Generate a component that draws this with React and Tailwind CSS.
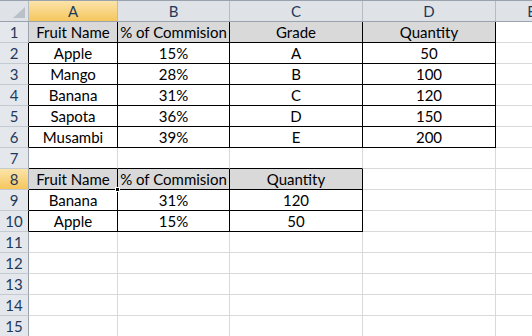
import React from "react";

const COLS = ["A", "B", "C", "D", "E"];
const WIDTHS = ["w-[89px]", "w-[112px]", "w-[133px]", "w-[133px]", "w-[72px]"];

const data = {
  1: ["Fruit Name", "% of Commision", "Grade", "Quantity"],
  2: ["Apple", "15%", "A", "50"],
  3: ["Mango", "28%", "B", "100"],
  4: ["Banana", "31%", "C", "120"],
  5: ["Sapota", "36%", "D", "150"],
  6: ["Musambi", "39%", "E", "200"],
  8: ["Fruit Name", "% of Commision", "Quantity"],
  9: ["Banana", "31%", "120"],
  10: ["Apple", "15%", "50"],
};

function inTable(r, c) {
  if (r >= 1 && r <= 6 && c >= 0 && c <= 3) return true;
  if (r >= 8 && r <= 10 && c >= 0 && c <= 2) return true;
  return false;
}
function isHead(r, c) {
  return (r === 1 && c <= 3) || (r === 8 && c <= 2);
}

function Cell({ r, c }) {
  const t = inTable(r, c);
  const rightBlack = t || inTable(r, c + 1);
  const bottomBlack = t || inTable(r + 1, c);
  const text = data[r] ? data[r][c] : undefined;
  return (
    <div
      className={[
        WIDTHS[c],
        "h-[21px] shrink-0 border-r border-b flex items-end justify-center pb-[1px] leading-[18px] whitespace-nowrap overflow-hidden text-black",
        rightBlack ? "border-r-black" : "border-r-[#d9d9d9]",
        bottomBlack ? "border-b-black" : "border-b-[#d9d9d9]",
        isHead(r, c) ? "bg-[#d9d9d9]" : "bg-white",
      ].join(" ")}
    >
      {text}
    </div>
  );
}

export default function App() {
  const rows = Array.from({ length: 15 }, (_, i) => i + 1);
  return (
    <div
      className="relative w-[532px] h-[336px] overflow-hidden bg-white text-[15px]"
      style={{ fontFamily: "Lato, 'Liberation Sans', sans-serif" }}
    >
      {/* column header */}
      <div className="flex h-[22px] border-t border-b border-t-[#9aa3ad] border-b-[#9aa3ad]">
        <div className="relative w-[29px] shrink-0 border-r border-r-[#b5bcc4] bg-[#dfe3e8]">
          <svg className="absolute left-0 top-0" width="28" height="20" viewBox="0 0 28 20">
            <polygon points="25,6 25,17 13,17" fill="#b9c0c8" />
          </svg>
        </div>
        {COLS.map((col, i) => (
          <div
            key={col}
            className={[
              WIDTHS[i],
              "shrink-0 flex items-end justify-center pb-[1px] leading-[18px] border-r border-r-[#b5bcc4] text-[#1e395b]",
              i === 0
                ? "bg-gradient-to-b from-[#fbe3a8] to-[#f5c75b]"
                : "bg-[#dfe3e8]",
            ].join(" ")}
          >
            {col}
          </div>
        ))}
      </div>
      {rows.map((r) => (
        <div key={r} className="flex">
          <div
            className={[
              "w-[29px] h-[21px] shrink-0 border-r border-b border-b-[#c4cad1] flex items-end justify-center pb-[1px] leading-[18px] text-[#1e395b]",
              inTable(r, 0) && r !== 1 && r !== 8 ? "border-r-black" : "border-r-[#9aa3ad]",
              r === 8
                ? "bg-gradient-to-b from-[#fbe3a8] to-[#f5c75b]"
                : "bg-[#e4e8ed]",
            ].join(" ")}
          >
            {r}
          </div>
          {COLS.map((_, c) => (
            <Cell key={c} r={r} c={c} />
          ))}
        </div>
      ))}
      {/* selection fill handle */}
      <div className="absolute left-[115px] top-[187px] w-[5px] h-[5px] bg-black border border-white" />
    </div>
  );
}
